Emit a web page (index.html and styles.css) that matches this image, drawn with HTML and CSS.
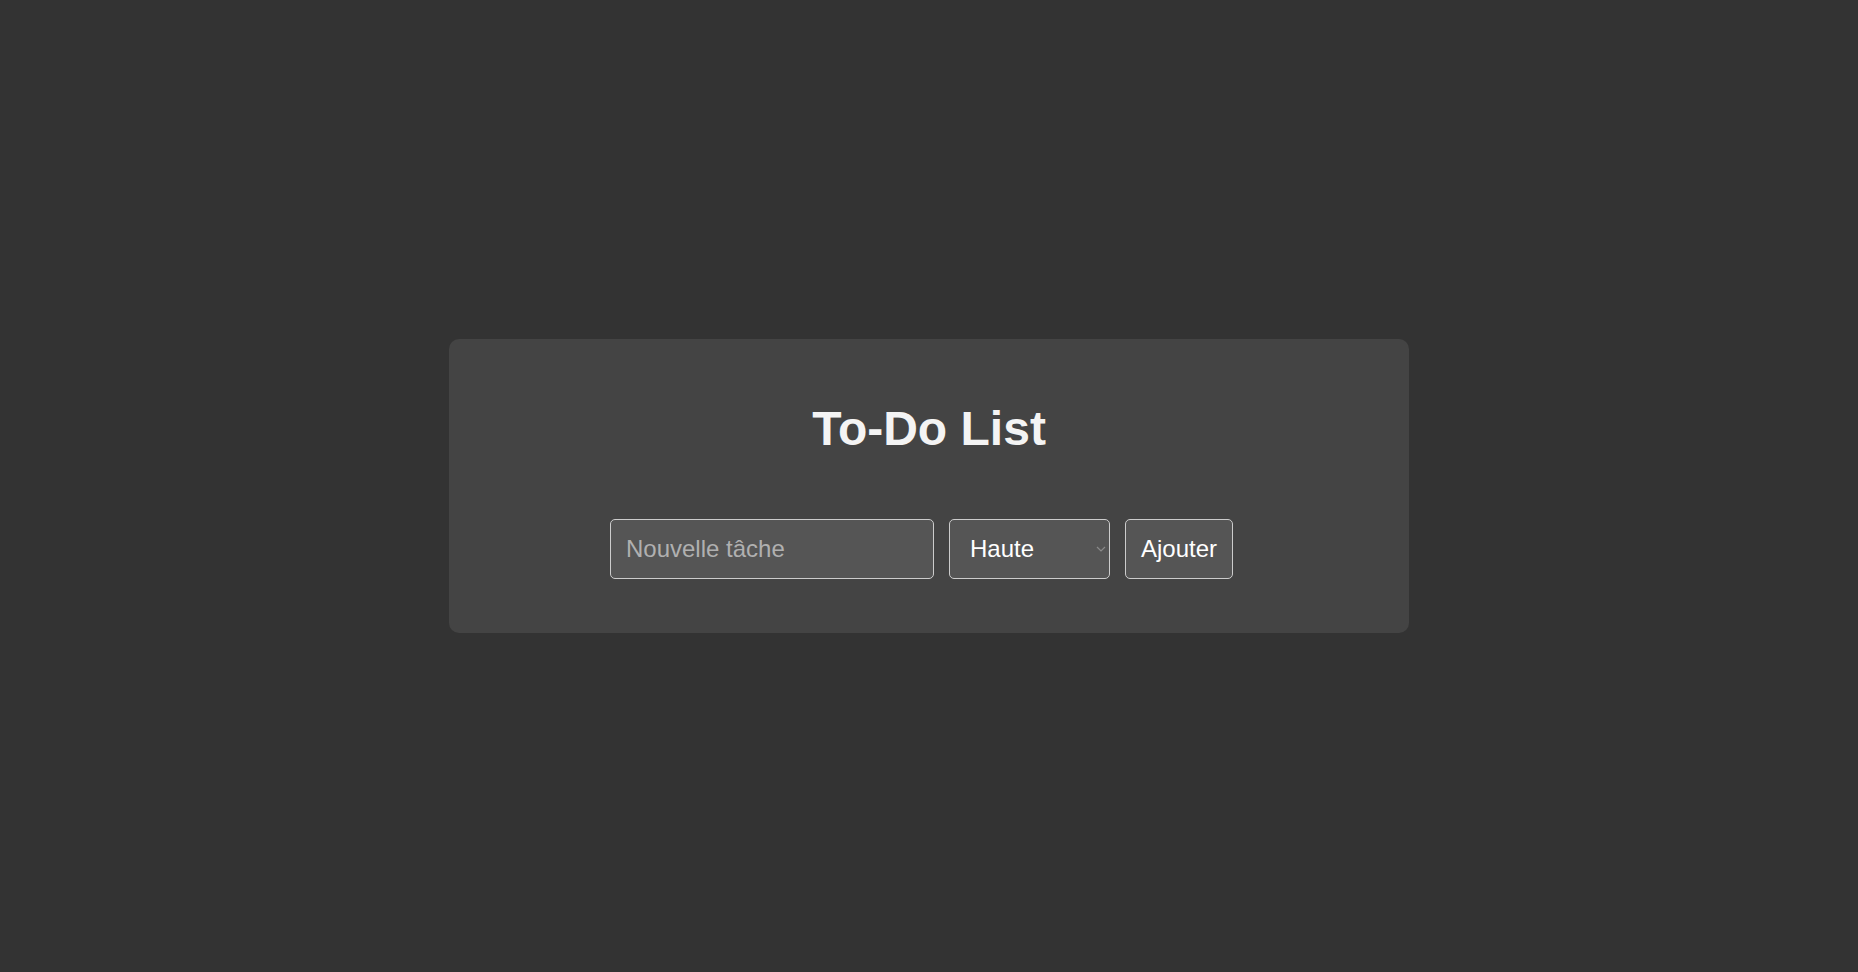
FILE: index.html
```html
<!DOCTYPE html>
<html lang="fr">
<head>
<meta charset="UTF-8">
<title>To-Do List</title>
<link rel="stylesheet" href="styles.css">
</head>
<body>
<div class="container">
  <h1 class="title">To-Do List</h1>
  <div class="form-row">
    <input class="task-input" type="text" placeholder="Nouvelle tâche">
    <span class="select-wrap">
      <select class="priority">
        <option>Haute</option>
        <option>Moyenne</option>
        <option>Basse</option>
      </select>
      <svg class="select-arrow" width="10" height="6" viewBox="0 0 10 6" aria-hidden="true">
        <path d="M1 1 L5 5 L9 1" fill="none" stroke="#8a8a8a" stroke-width="1.2"/>
      </svg>
    </span>
    <button class="add-btn" type="button">Ajouter</button>
  </div>
</div>
</body>
</html>
```
FILE: styles.css
```css
html, body {
  margin: 0;
  padding: 0;
}

body {
  background: #333333;
  color: #ffffff;
  font-family: "Liberation Sans", Arial, sans-serif;
  height: 100vh;
  display: flex;
  align-items: center;
  justify-content: center;
}

.container {
  background: #444444;
  width: 900px;
  padding: 30px;
  border-radius: 10px;
}

.title {
  font-size: 48px;
  font-weight: bold;
  text-align: center;
  color: #f4f4f4;
  margin: 32px 0 63px;
}

.form-row {
  display: flex;
  justify-content: center;
  margin-bottom: 24px;
}

.task-input,
.priority,
.add-btn {
  font-family: "Liberation Sans", Arial, sans-serif;
  font-size: 24px;
  line-height: 28px;
  padding: 15px;
  border: 1px solid #cccccc;
  border-radius: 5px;
  background: #555555;
  color: #ffffff;
}

.task-input,
.select-wrap,
.add-btn {
  margin-right: 15px;
}

.task-input {
  width: 324px;
  box-sizing: border-box;
  outline: none;
}

.task-input::placeholder {
  color: #b0b0b0;
}

.select-wrap {
  position: relative;
  display: flex;
}

.priority {
  appearance: none;
  -webkit-appearance: none;
  width: 161px;
  box-sizing: border-box;
  padding: 15px 15px 15px 20px;
  outline: none;
}

.select-arrow {
  position: absolute;
  right: 4px;
  top: 27px;
  pointer-events: none;
}

.add-btn {
  cursor: pointer;
}
```
